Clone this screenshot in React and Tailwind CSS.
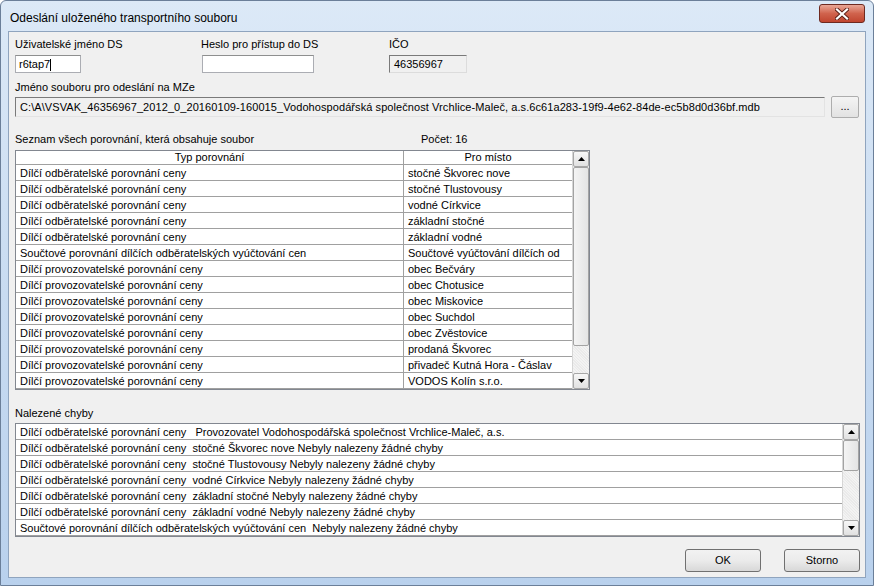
import React from "react";

const rows = [
  ["Dílčí odběratelské porovnání ceny", "stočné Škvorec nove"],
  ["Dílčí odběratelské porovnání ceny", "stočné Tlustovousy"],
  ["Dílčí odběratelské porovnání ceny", "vodné Církvice"],
  ["Dílčí odběratelské porovnání ceny", "základní stočné"],
  ["Dílčí odběratelské porovnání ceny", "základní vodné"],
  ["Součtové porovnání dílčích odběratelských vyúčtování cen", "Součtové vyúčtování dílčích od"],
  ["Dílčí provozovatelské porovnání ceny", "obec Bečváry"],
  ["Dílčí provozovatelské porovnání ceny", "obec Chotusice"],
  ["Dílčí provozovatelské porovnání ceny", "obec Miskovice"],
  ["Dílčí provozovatelské porovnání ceny", "obec Suchdol"],
  ["Dílčí provozovatelské porovnání ceny", "obec Zvěstovice"],
  ["Dílčí provozovatelské porovnání ceny", "prodaná Škvorec"],
  ["Dílčí provozovatelské porovnání ceny", "přivadeč Kutná Hora - Čáslav"],
  ["Dílčí provozovatelské porovnání ceny", "VODOS Kolín s.r.o."],
];

const errors = [
  "Dílčí odběratelské porovnání ceny   Provozovatel Vodohospodářská společnost Vrchlice-Maleč, a.s.",
  "Dílčí odběratelské porovnání ceny  stočné Škvorec nove Nebyly nalezeny žádné chyby",
  "Dílčí odběratelské porovnání ceny  stočné Tlustovousy Nebyly nalezeny žádné chyby",
  "Dílčí odběratelské porovnání ceny  vodné Církvice Nebyly nalezeny žádné chyby",
  "Dílčí odběratelské porovnání ceny  základní stočné Nebyly nalezeny žádné chyby",
  "Dílčí odběratelské porovnání ceny  základní vodné Nebyly nalezeny žádné chyby",
  "Součtové porovnání dílčích odběratelských vyúčtování cen  Nebyly nalezeny žádné chyby",
];

function Arrow({ down }) {
  return (
    <div className="h-[16px] shrink-0 flex items-center justify-center bg-gradient-to-b from-[#f7f7f7] to-[#e1e1e1] border border-[#a7a7a7] rounded-[2px]">
      <svg width="7" height="4" viewBox="0 0 7 4">
        {down ? <path d="M0 0h7L3.5 4z" fill="#000" /> : <path d="M0 4h7L3.5 0z" fill="#000" />}
      </svg>
    </div>
  );
}

function ScrollBar({ thumb }) {
  return (
    <div className="w-[17px] shrink-0 flex flex-col bg-[#ececec] border-l border-[#d6d6d6]">
      <Arrow />
      <div className={`${thumb} shrink-0 bg-gradient-to-r from-[#f4f4f4] to-[#e4e4e4] border border-[#a3a3a3] rounded-[2px]`} />
      <div className="flex-1 bg-[repeating-linear-gradient(45deg,#f3f3f3_0,#f3f3f3_1px,#eaeaea_1px,#eaeaea_2px)]" />
      <Arrow down />
    </div>
  );
}

function Button({ children }) {
  return (
    <button className="w-[76px] h-[23px] border border-[#707070] rounded-[3px] bg-gradient-to-b from-[#f2f2f2] via-[#ebebeb] to-[#d8d8d8] text-[11px] leading-none">
      {children}
    </button>
  );
}

export default function App() {
  return (
    <div className="w-[874px] h-[586px] overflow-hidden bg-white font-['Liberation_Sans',Arial,sans-serif] text-[11px] text-black">
      <div className="w-full h-full flex flex-col border border-[#6b7f99] rounded-t-[6px] bg-gradient-to-b from-[#dce9f7] via-[#c8dbf1] to-[#b9d1ed]">
        <div className="h-[30px] shrink-0 flex items-start justify-between pl-[9px] pr-[8px]">
          <span className="mt-[10px] text-[12px] leading-[14px]">Odeslání uloženého transportního souboru</span>
          <div className="mt-[3px] w-[46px] h-[19px] flex items-center justify-center rounded-[3px] border border-[#6e2a20] bg-gradient-to-b from-[#e9a797] via-[#d0634d] to-[#c0452f]">
            <svg width="14" height="12" viewBox="0 0 14 12">
              <path d="M2 1.5L12 10.5M12 1.5L2 10.5" stroke="#5a2018" strokeWidth="4" strokeLinecap="square" />
              <path d="M2 1.5L12 10.5M12 1.5L2 10.5" stroke="#fff" strokeWidth="2.2" strokeLinecap="square" />
            </svg>
          </div>
        </div>

        <div className="flex-1 mx-[7px] mb-[7px] border border-[#8fa4be] bg-[#f0f0f0] flex flex-col pl-[6px] pr-[4px] pt-[6px]">
          <div className="flex">
            <div className="w-[186px] flex flex-col">
              <span className="h-[13px] leading-[13px]">Uživatelské jméno DS</span>
              <div className="mt-[4px] w-[66px] h-[18px] bg-white border border-[#abadb3] border-t-[#8e8f8f] pl-[3px] leading-[16px]">
                r6tap7<span className="inline-block w-px h-[12px] bg-black align-middle" />
              </div>
            </div>
            <div className="w-[188px] flex flex-col">
              <span className="h-[13px] leading-[13px]">Heslo pro přístup do DS</span>
              <div className="mt-[4px] ml-[1px] w-[112px] h-[18px] bg-white border border-[#abadb3] border-t-[#8e8f8f]" />
            </div>
            <div className="flex flex-col">
              <span className="h-[13px] leading-[13px]">IČO</span>
              <div className="mt-[4px] w-[78px] h-[18px] bg-[#f0f0f0] border border-[#dcdcdc] border-t-[#7a7a7a] border-l-[#7a7a7a] pl-[4px] leading-[16px]">
                46356967
              </div>
            </div>
          </div>

          <span className="mt-[8px] h-[13px] leading-[13px]">Jméno souboru pro odeslání na MZe</span>
          <div className="mt-[2px] h-[22px] flex items-center gap-[6px]">
            <div className="w-[810px] h-[20px] bg-[#f0f0f0] border border-[#e3e3e3] border-t-[#7a7a7a] border-l-[#7a7a7a] pl-[4px] leading-[18px] tracking-[0.08px] whitespace-nowrap overflow-hidden">
              C:\A\VSVAK_46356967_2012_0_20160109-160015_Vodohospodářská společnost Vrchlice-Maleč, a.s.6c61a283-19f9-4e62-84de-ec5b8d0d36bf.mdb
            </div>
            <div className="w-[28px] h-[22px] border border-[#adadad] rounded-[2px] bg-gradient-to-b from-[#f4f4f4] to-[#e2e2e2] flex items-center justify-center leading-none pb-[2px]">
              ...
            </div>
          </div>

          <div className="mt-[15px] h-[13px] flex leading-[13px]">
            <span className="w-[406px]">Seznam všech porovnání, která obsahuje soubor</span>
            <span>Počet: 16</span>
          </div>

          <div className="mt-[4px] w-[575px] h-[240px] border border-[#828790] flex bg-white">
            <div className="flex-1 flex flex-col">
              <div className="h-[14px] flex border-b border-[#a0a0a0] leading-[13px]">
                <div className="w-[388px] text-center border-r border-[#a0a0a0]">Typ porovnání</div>
                <div className="flex-1 text-center">Pro místo</div>
              </div>
              {rows.map((r, i) => (
                <div key={i} className="h-[16px] flex border-b border-[#a0a0a0] leading-[14px] whitespace-nowrap">
                  <div className="w-[388px] pl-[4px] pt-[1px] border-r border-[#a0a0a0] overflow-hidden">{r[0]}</div>
                  <div className="flex-1 pl-[4px] pt-[1px] overflow-hidden">{r[1]}</div>
                </div>
              ))}
            </div>
            <ScrollBar thumb="h-[179px]" />
          </div>

          <span className="mt-[17px] h-[13px] leading-[13px]">Nalezené chyby</span>
          <div className="mt-[3px] w-[845px] h-[114px] border border-[#828790] flex bg-white">
            <div className="flex-1 flex flex-col">
              {errors.map((e, i) => (
                <div key={i} className="h-[16px] shrink-0 border-b border-[#a0a0a0] pl-[4px] pt-[1px] leading-[14px] whitespace-pre overflow-hidden">
                  {e}
                </div>
              ))}
            </div>
            <ScrollBar thumb="h-[31px]" />
          </div>

          <div className="mt-[12px] mr-[1px] flex justify-end gap-[23px]">
            <Button>OK</Button>
            <Button>Storno</Button>
          </div>
        </div>
      </div>
    </div>
  );
}
